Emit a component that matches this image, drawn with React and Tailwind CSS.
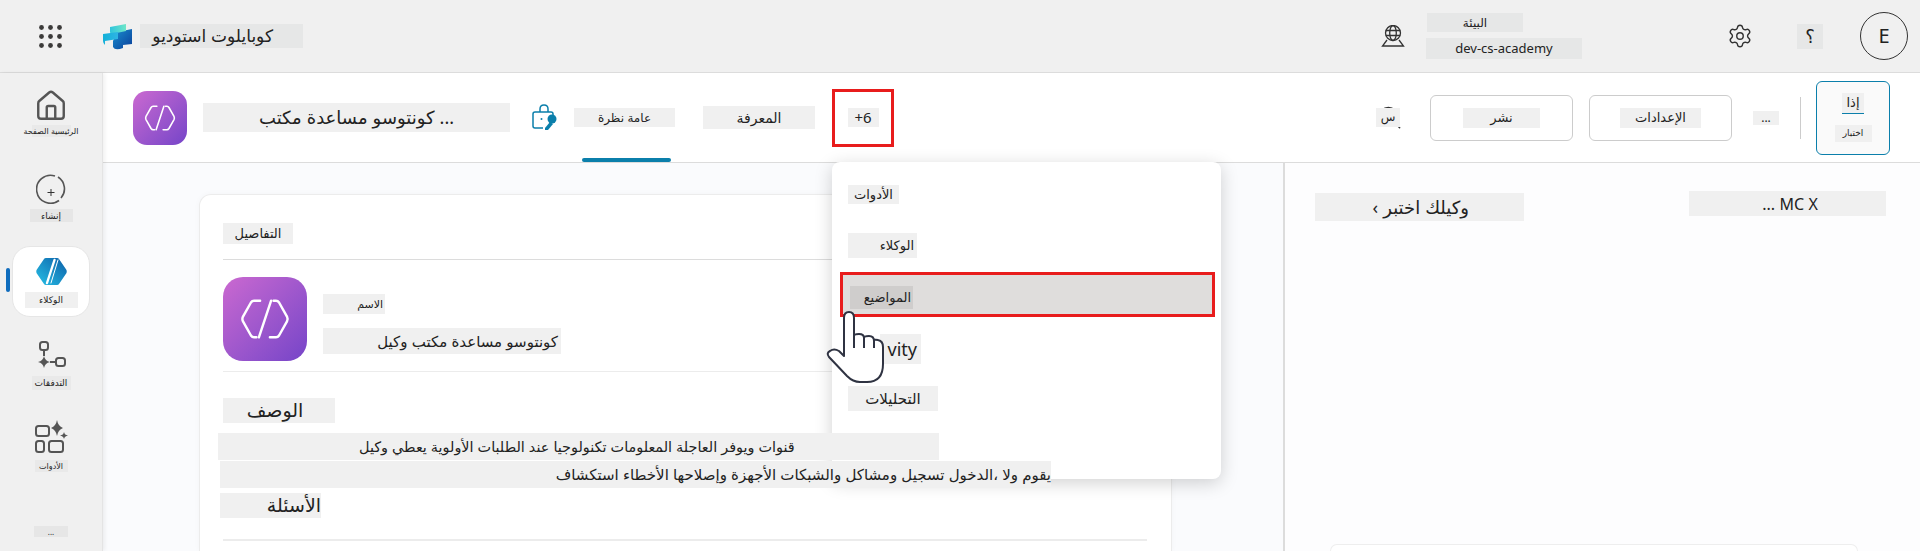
import React from 'react'
import { House, Search, Settings } from 'lucide-react'

// words run left to right in the screenshot, so each one gets its own box
function Patch({ className, children }) {
  return (
    <div className={`flex shrink-0 items-center gap-[0.28em] whitespace-nowrap text-[#222] ${className}`}>
      {children.split(' ').map((word, i) => <span key={i}>{word}</span>)}
    </div>
  )
}

function AppsIcon() {
  return (
    <svg width="23" height="23" viewBox="0 0 23 23" fill="#3b3a39">
      {[2.5, 11.5, 20.5].map(y => [2.5, 11.5, 20.5].map(x => <circle key={`${x}-${y}`} cx={x} cy={y} r="2.4" />))}
    </svg>
  )
}

function StudioLogo() {
  return (
    <svg width="29" height="27" viewBox="0 0 29 27">
      <defs>
        <linearGradient id="sl1" x1="0" y1="0" x2="1" y2="1">
          <stop offset="0" stopColor="#1a8fd0" />
          <stop offset="1" stopColor="#0a3f9a" />
        </linearGradient>
        <linearGradient id="sl2" x1="0" y1="0" x2="1" y2="0">
          <stop offset="0" stopColor="#2fc4dc" />
          <stop offset="1" stopColor="#6fe6c8" />
        </linearGradient>
        <linearGradient id="sl3" x1="0" y1="0" x2="1" y2="0">
          <stop offset="0" stopColor="#13b0d8" />
          <stop offset="1" stopColor="#2fb4e4" />
        </linearGradient>
      </defs>
      <path d="M14 9 L29 6 V21 L20 22 V25 Q12 28 10 24 V18 Z" fill="url(#sl1)" />
      <path d="M7 4 L23 1 V8 L9 11 Q7 11 7 9 Z" fill="url(#sl2)" />
      <path d="M0 11 L15 9 V16 L2 18 L2 22 Q0 20 0 18 Z" fill="url(#sl3)" />
    </svg>
  )
}

function CreateIcon() {
  return (
    <svg width="30" height="30" viewBox="0 0 30 30" fill="none" stroke="#555" strokeWidth="1.6">
      <path d="M19 2 A14 14 0 1 0 23 26.500" />
      <path d="M25 24 A14 14 0 0 0 22 3" />
      <path d="M15 15v7M11.500 18.500h7" stroke="#333" strokeWidth="1" />
    </svg>
  )
}

function AgentIcon() {
  return (
    <svg width="31" height="27" viewBox="0 0 31 27">
      <defs>
        <linearGradient id="ag1" x1="0" y1="1" x2="1" y2="0">
          <stop offset="0" stopColor="#28c0e6" />
          <stop offset="1" stopColor="#0b5fa8" />
        </linearGradient>
      </defs>
      <path d="M8 1 Q8.5 0 10 0 H21 Q22.5 0 23 1 L30.5 12 Q31 13.5 30.5 15 L23 26 Q22.5 27 21 27 H10 Q8.5 27 8 26 L.5 15 Q0 13.5 .5 12 Z" fill="url(#ag1)" />
      <path d="M18.5 2 L11 25" stroke="#fff" strokeWidth="2.4" strokeLinecap="round" />
      <path d="M22 2 L15 25" stroke="#fff" strokeWidth="1" strokeLinecap="round" />
    </svg>
  )
}

function FlowIcon() {
  return (
    <svg width="28" height="29" viewBox="0 0 28 29" fill="none" stroke="#555" strokeWidth="2">
      <rect x="2" y="1" width="8" height="8" rx="2.5" />
      <path d="M6 9v6" />
      <path d="M6 15 Q7 20 12 21 Q7 22 6 27 Q5 22 0 21 Q5 20 6 15Z" fill="#555" stroke="none" />
      <path d="M12 21h6" />
      <rect x="18" y="17" width="9" height="8" rx="2.5" />
    </svg>
  )
}

function ToolsIcon() {
  return (
    <svg width="33" height="33" viewBox="0 0 33 33" fill="none" stroke="#555" strokeWidth="2">
      <rect x="1" y="6" width="13" height="10" rx="2.5" />
      <rect x="1" y="21" width="8" height="11" rx="2.5" />
      <rect x="14" y="21" width="14" height="11" rx="2.5" />
      <path d="M22 0 Q23 6 28 8 Q23 10 22 16 Q21 10 16 8 Q21 6 22 0Z" fill="#555" stroke="none" />
      <path d="M29 12 Q29.5 15 33 15.500 Q29.500 16 29 19 Q28.500 16 25 15.500 Q28.500 15 29 12Z" fill="#555" stroke="none" />
    </svg>
  )
}

function HexIcon({ size }) {
  return (
    <svg width={size} height={size} viewBox="0 0 54 54" fill="none" stroke="#fff" strokeWidth="2" strokeLinecap="round" strokeLinejoin="round">
      <path d="M23 12 H18 Q16.500 12 15.500 13.500 L9 25 Q8 27 9 29 L15.500 40.500 Q16.500 42 18 42 H20" />
      <path d="M34 12 H36 Q37.500 12 38.500 13.500 L45 25 Q46 27 45 29 L38.500 40.500 Q37.500 42 36 42 H31" />
      <path d="M32 12 L22 42" />
    </svg>
  )
}

function GlobeKeyboard() {
  return (
    <svg width="24" height="22" viewBox="0 0 24 22" fill="none" stroke="#333" strokeWidth="1.3">
      <circle cx="12" cy="8" r="7.500" />
      <ellipse cx="12" cy="8" rx="3.300" ry="7.500" />
      <path d="M4.800 5.500h14.400M4.800 10.500h14.400" />
      <path d="M6 15 L1.500 21 H22.500 L18 15" />
    </svg>
  )
}

function LockKey() {
  return (
    <svg width="26" height="27" viewBox="0 0 26 27" fill="none" stroke="#0b7fab" strokeWidth="1.5">
      <path d="M8 8 V5 Q8 1 12 1 Q16 1 16 5 V8" />
      <path d="M11 24 H3 Q1 24 1 22 V10 Q1 8 3 8 H19 Q21 8 21 10 V11" />
      <circle cx="9.500" cy="15" r="1" fill="#0b7fab" stroke="none" />
      <circle cx="20" cy="15" r="4.500" fill="#0b7fab" stroke="none" />
      <path d="M18 18 L13 24 V26 H16 L21 20Z" fill="#0b7fab" stroke="none" />
    </svg>
  )
}

function HandCursor() {
  return (
    <svg width="60" height="74" viewBox="0 0 60 74" fill="#fff" stroke="#2f3342" strokeWidth="2" strokeLinejoin="round">
      <path d="M18 8 Q18 2 23 2 Q28 2 28 8 V26 Q28 24 33 24 Q38 24 38 28 Q38 26 43 26 Q48 26 48 31 Q48 29 52 30 Q57 31 57 37 V54 Q57 72 41 72 H34 Q27 72 21 66 L3 47 Q0 43 4 41 Q8 38 13 41 L18 46 Z" />
      <path d="M28 26 V38 M38 28 V38 M48 31 V38" fill="none" strokeWidth="2" />
    </svg>
  )
}

function Sidebar() {
  return (
    <aside className="relative flex w-[103px] shrink-0 flex-col items-center border-r border-[#e4e4e4] bg-[#f0f0f0] pt-[16px] text-[9px] shadow-[2px_0_4px_rgba(0,0,0,0.06)]">
      <House size={34} strokeWidth={1.700} className="text-[#555]" />
      <Patch className="mt-[2px] h-[12px] w-[39px] justify-center bg-[#e9e9e9] text-[8px]">الصفحة الرئيسية</Patch>
      <div className="mt-[37px]"><CreateIcon /></div>
      <Patch className="mt-[5px] h-[13px] w-[43px] justify-center bg-[#e6e6e6]">إنشاء</Patch>
      <div className="relative mt-[24px] flex h-[71px] w-[78px] flex-col items-center rounded-[18px] border border-[#e6e6e6] bg-white pt-[11px]">
        <span className="absolute -left-[7px] top-[21px] h-[24px] w-[4px] rounded bg-[#0f6cbd]" />
        <AgentIcon />
        <Patch className="mt-[7px] h-[16px] w-[53px] justify-center bg-[#f0f0f0]">الوكلاء</Patch>
      </div>
      <div className="mt-[24px] pl-[1px]"><FlowIcon /></div>
      <Patch className="mt-[6px] h-[14px] w-[39px] justify-center bg-[#e9e9e9]">التدفقات</Patch>
      <div className="mt-[30px]"><ToolsIcon /></div>
      <Patch className="mt-[7px] h-[12px] w-[33px] justify-center bg-[#e9e9e9] text-[8px]">الأدوات</Patch>
      <Patch className="mt-[54px] h-[11px] w-[34px] justify-center bg-[#e6e6e6] text-[8px]">...</Patch>
    </aside>
  )
}

function SubHeader() {
  return (
    <header className="flex h-[90px] shrink-0 items-center border-b border-[#dcdcdc] bg-white text-[14px]">
      <div className="ml-[30px] flex h-[54px] w-[54px] shrink-0 items-center justify-center rounded-[14px] bg-linear-to-br from-[#cb68d0] to-[#7644c8]">
        <HexIcon size={42} />
      </div>
      <Patch className="ml-[16px] h-[29px] w-[307px] bg-[#f0f0f0] pl-[56px] text-[18px]">مكتب مساعدة كونتوسو ...</Patch>
      <div className="ml-[22px]"><LockKey /></div>
      <div className="relative ml-[16px] flex h-full items-center">
        <Patch className="h-[19px] w-[101px] justify-center bg-[#f0f0f0] text-[12px]">نظرة عامة</Patch>
        <span className="absolute bottom-[0px] left-[8px] h-[4px] w-[89px] rounded bg-[#0b7fab]" />
      </div>
      <Patch className="ml-[28px] h-[23px] w-[112px] justify-center bg-[#f0f0f0] text-[14px]">المعرفة</Patch>
      <div className="ml-[17px] flex h-[58px] w-[62px] items-center justify-center border-[3px] border-[#e81c1c]">
        <Patch className="h-[19px] w-[31px] justify-center bg-[#f0f0f0] text-[15px]">+6</Patch>
      </div>
      <div className="ml-auto flex items-center">
        <div className="relative h-[24px] w-[26px]">
          <Search size={27} strokeWidth={1.300} className="absolute -top-[2px] left-[0px] text-[#333]" />
          <Patch className="relative mt-[2px] h-[19px] w-[24px] justify-center bg-[#f0f0f0] text-[12px]">س</Patch>
        </div>
        <button className="ml-[28px] flex h-[46px] w-[143px] items-center justify-center rounded-[6px] border border-[#cccccc] bg-white">
          <Patch className="h-[20px] w-[77px] justify-center bg-[#f0f0f0] text-[13px]">نشر</Patch>
        </button>
        <button className="ml-[16px] flex h-[46px] w-[143px] items-center justify-center rounded-[6px] border border-[#cccccc] bg-white">
          <Patch className="h-[20px] w-[81px] justify-center bg-[#f0f0f0] text-[13px]">الإعدادات</Patch>
        </button>
        <Patch className="ml-[21px] h-[14px] w-[26px] justify-center bg-[#f0f0f0] text-[12px]">...</Patch>
        <div className="ml-[21px] h-[42px] w-px bg-[#cccccc]" />
        <button className="ml-[15px] mr-[30px] flex h-[74px] w-[74px] flex-col items-center rounded-[6px] border border-[#0b7fab] bg-[#fafafa] pt-[11px]">
          <Patch className="h-[21px] w-[22px] justify-center border-b border-[#0b7fab] bg-[#f0f0f0] text-[13px]">إذا</Patch>
          <Patch className="mt-[11px] h-[17px] w-[37px] justify-center bg-[#f0f0f0] text-[9px]">اختبار</Patch>
        </button>
      </div>
    </header>
  )
}

function DetailsCard() {
  return (
    <section className="ml-[96px] mt-[31px] w-[973px] flex-1 rounded-t-[12px] border border-b-0 border-[#ececec] bg-white pl-[23px] pr-[24px] pt-[28px] text-[13px] shadow-[0_0_6px_rgba(0,0,0,0.03)]">
      <Patch className="h-[21px] w-[70px] justify-center bg-[#f0f0f0]">التفاصيل</Patch>
      <div className="mt-[15px] h-px bg-[#dcdcdc]" />
      <div className="mt-[17px] flex">
        <div className="flex h-[84px] w-[84px] items-center justify-center rounded-[20px] bg-linear-to-br from-[#cb68d0] to-[#7644c8]">
          <HexIcon size={66} />
        </div>
        <div className="ml-[16px] pt-[17px]">
          <Patch className="h-[20px] w-[62px] justify-end bg-[#f0f0f0] pr-[2px] text-[11px]">الاسم</Patch>
          <Patch className="mt-[14px] h-[26px] w-[238px] justify-end bg-[#f0f0f0] pr-[3px] text-[15px]">وكيل مكتب مساعدة كونتوسو</Patch>
        </div>
      </div>
      <div className="mt-[10px] h-px bg-[#ececec]" />
      <Patch className="mt-[26px] h-[25px] w-[112px] justify-center bg-[#f0f0f0] pr-[8px] text-[19px]">الوصف</Patch>
      {/* these two lines sit on top of the open menu in the screenshot */}
      <Patch className="relative z-10 -ml-[5px] mt-[10px] h-[27px] w-[721px] bg-[#f0f0f0] pl-[141px] text-[14.4px]">وكيل يعطي الأولوية الطلبات عند تكنولوجيا المعلومات العاجلة ويوفر قنوات</Patch>
      <Patch className="relative z-10 -ml-[3px] mt-[1px] h-[27px] w-[831px] justify-end bg-[#f0f0f0] text-[15px]">استكشاف الأخطاء وإصلاحها الأجهزة والشبكات ومشاكل تسجيل الدخول، ولا يقوم</Patch>
      <Patch className="-ml-[3px] mt-[5px] h-[25px] w-[101px] justify-end bg-[#f0f0f0] text-[19px]">الأسئلة</Patch>
      <div className="mt-[21px] h-[2px] bg-[#ececec]" />
    </section>
  )
}

function TestPanel() {
  return (
    <section className="flex min-w-0 flex-1 flex-col border-l-2 border-[#dcdcdc] bg-[#fdfdfe] text-[18px]">
      <div className="mt-[30px] flex items-start">
        <Patch className="ml-[30px] h-[28px] w-[209px] justify-end bg-[#f0f0f0] pr-[55px]">‹ اختبر وكيلك</Patch>
        <Patch className="ml-[165px] mt-[-2px] h-[25px] w-[197px] justify-end bg-[#f0f0f0] pr-[68px] text-[16px]">... MC X</Patch>
      </div>
      <div className="ml-[45px] mt-auto h-[7px] w-[528px] rounded-t-[10px] border border-b-0 border-[#eeeeee] bg-white" />
    </section>
  )
}

function OverflowMenu() {
  return (
    <div className="absolute left-[832px] top-[162px] flex h-[317px] w-[389px] flex-col rounded-[8px] bg-white pl-[16px] text-[13px] shadow-[0_4px_18px_rgba(0,0,0,0.18)]">
      <Patch className="mt-[23px] h-[19px] w-[51px] justify-center bg-[#f0f0f0]">الأدوات</Patch>
      <Patch className="mt-[29px] h-[25px] w-[69px] justify-end bg-[#f0f0f0] pr-[3px] text-[13px]">الوكلاء</Patch>
      <div className="-ml-[8px] mt-[14px] flex h-[45px] w-[375px] items-center border-[3px] border-[#e81c1c] bg-[#dfdddc] pl-[7px] pt-[6px]">
        <Patch className="h-[23px] w-[63px] justify-end bg-[#cfcdcc] pr-[2px]">المواضيع</Patch>
      </div>
      <Patch className="ml-[32px] mt-[17px] h-[30px] w-[41px] justify-end bg-[#f0f0f0] pr-[4px] text-[18px]">vity</Patch>
      <Patch className="mt-[22px] h-[25px] w-[90px] justify-center bg-[#f0f0f0] text-[15px]">التحليلات</Patch>
    </div>
  )
}

export default function App() {
  return (
    <div className="relative flex h-[551px] w-[1920px] flex-col overflow-hidden bg-white font-['Noto_Sans','DejaVu_Sans',sans-serif]">
      <header className="flex h-[73px] shrink-0 items-center border-b border-[#dcdcdc] bg-[#f0f0f0] text-[17px]">
        <div className="ml-[39px] flex"><AppsIcon /></div>
        <div className="ml-[41px] flex"><StudioLogo /></div>
        <Patch className="ml-[8px] h-[24px] w-[163px] justify-end bg-[#e6e7e7] pr-[30px]">استوديو كوبايلوت</Patch>
        <div className="ml-auto flex items-center">
          <GlobeKeyboard />
          <div className="ml-[21px]">
            <Patch className="ml-[1px] h-[19px] w-[96px] justify-center bg-[#e6e7e7] text-[12px]">البيئة</Patch>
            <Patch className="mt-[6px] h-[21px] w-[156px] justify-center bg-[#e6e7e7] text-[13px]">dev-cs-academy</Patch>
          </div>
          <Settings size={26} strokeWidth={1.300} className="ml-[145px] text-[#333]" />
          <Patch className="ml-[44px] h-[25px] w-[26px] justify-center bg-[#e6e7e7] text-[18px]">؟</Patch>
          <div className="ml-[37px] mr-[12px] flex h-[48px] w-[48px] items-center justify-center rounded-full border border-[#333] text-[20px] text-[#222]">E</div>
        </div>
      </header>
      <div className="flex min-h-0 flex-1">
        <Sidebar />
        <main className="flex min-w-0 flex-1 flex-col">
          <SubHeader />
          <div className="flex min-h-0 flex-1">
            <div className="flex w-[1180px] shrink-0 flex-col bg-[#fafbfd]">
              <DetailsCard />
            </div>
            <TestPanel />
          </div>
        </main>
      </div>
      <OverflowMenu />
      <div className="absolute left-[826px] top-[310px]"><HandCursor /></div>
    </div>
  )
}
